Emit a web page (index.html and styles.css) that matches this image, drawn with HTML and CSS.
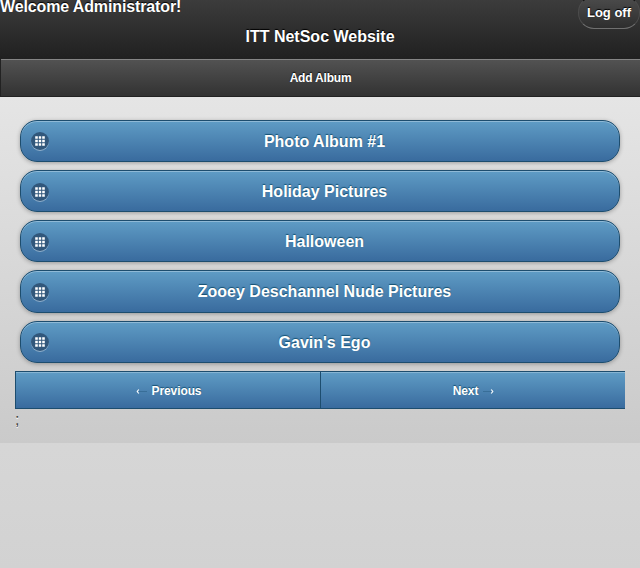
FILE: index.html
```html
<!DOCTYPE html>
<html lang="en">
<head>
<meta charset="utf-8">
<title>ITT NetSoc Website</title>
<link rel="stylesheet" href="styles.css">
</head>
<body>
<svg class="defs" aria-hidden="true">
  <symbol id="grid" viewBox="0 0 18 18"><path fill="#fff" d="M4.2 4.2h2.6v2.6H4.2zM7.8 4.2h2.4v2.6H7.8zM11.2 4.2h2.6v2.6h-2.6zM4.2 7.8h2.6v2.4H4.2zM7.8 7.8h2.4v2.4H7.8zM11.2 7.8h2.6v2.4h-2.6zM4.2 11.2h2.6v2.6H4.2zM7.8 11.2h2.4v2.6H7.8zM11.2 11.2h2.6v2.6h-2.6z"/></symbol>
</svg>
<header class="header">
  <div class="welcome">Welcome Administrator!</div>
  <h1 class="title">ITT NetSoc Website</h1>
  <a class="logoff">Log off</a>
</header>
<nav class="toolbar"><a>Add Album</a></nav>
<main class="content">
  <div class="albums">
    <a class="album"><svg class="icon"><use href="#grid"/></svg><span>Photo Album #1</span></a>
    <a class="album"><svg class="icon low"><use href="#grid"/></svg><span>Holiday Pictures</span></a>
    <a class="album"><svg class="icon low"><use href="#grid"/></svg><span>Halloween</span></a>
    <a class="album tall"><svg class="icon"><use href="#grid"/></svg><span>Zooey Deschannel Nude Pictures</span></a>
    <a class="album"><svg class="icon"><use href="#grid"/></svg><span>Gavin's Ego</span></a>
  </div>
  <nav class="pager">
    <a><svg class="arrow" viewBox="0 0 12 7"><path class="shaft" d="M3 3.5h8"/><path class="head" d="M2.8 1.5 1.2 3.5l1.6 2"/></svg><span>Previous</span></a>
    <a><span>Next</span><svg class="arrow" viewBox="0 0 12 7"><path class="shaft" d="M1 3.5h8"/><path class="head" d="M9.2 1.5 10.8 3.5 9.2 5.5"/></svg></a>
  </nav>
  <div class="stray">;</div>
</main>
</body>
</html>
```
FILE: styles.css
```css
* { box-sizing: border-box; }
html { background: #d3d3d3; }
body {
  margin: 0;
  min-height: 568px;
  background: linear-gradient(#e5e5e5, #d2d2d2);
  font: 16px/20px "Liberation Sans", Arial, sans-serif;
}
.defs { display: none; }
.header {
  position: relative;
  height: 59px;
  background: linear-gradient(#3c3c3c, #202020);
  color: #fff;
  font-weight: bold;
  text-shadow: 0 -1px 1px #000;
}
.welcome { height: 27px; line-height: 14px; letter-spacing: -.13px; }
.title { margin: 0; font-size: 16px; line-height: 20px; text-align: center; }
.logoff {
  position: absolute;
  right: 0;
  top: -4px;
  width: 62px;
  height: 33px;
  border: 1px solid #151515;
  border-bottom-color: #707070;
  border-left-color: #4c4c4c;
  border-right-color: #4c4c4c;
  border-radius: 16px;
  background: linear-gradient(#4c4c4c, #2e2e2e);
  font-size: 13px;
  line-height: 32px;
  text-align: center;
}
.toolbar {
  height: 38px;
  border: solid #222;
  border-width: 0 0 1px 1px;
  background: linear-gradient(#535353, #323232);
  box-shadow: inset 0 1px 0 #858585;
  color: #fff;
  font-size: 12px;
  font-weight: bold;
  letter-spacing: -.2px;
  line-height: 38px;
  text-align: center;
  text-shadow: 0 -1px 1px #111;
}
.content {
  height: 346px;
  padding: 23px 15px 0;
  background: linear-gradient(#e5e5e5, #cacaca);
}
.albums { display: flex; flex-direction: column; gap: 8px; padding: 0 5px; }
.album {
  display: flex;
  align-items: center;
  height: 42px;
  padding: 0 19px 0 10px;
  border: 1px solid #1d4d6e;
  border-radius: 17px;
  background: linear-gradient(#5f9cc5, #396b9e);
  box-shadow: inset 0 1px 0 rgba(255,255,255,.3), 0 1px 4px rgba(0,0,0,.3);
  color: #fff;
  font-weight: bold;
  text-shadow: 0 -1px 1px #145072;
}
.tall { height: 43px; }
.album span { flex: 1; padding-top: 2px; text-align: center; }
.tall span { padding-top: 0; }
.icon {
  flex: none;
  width: 18px;
  height: 18px;
  border-radius: 50%;
  background: #31577b;
  box-shadow: 0 1px 0 rgba(255,255,255,.4);
}
.low { margin-top: 2px; }
.pager {
  display: grid;
  grid-template-columns: 305px 305px;
  height: 38px;
  margin-top: 8px;
}
.pager a {
  display: flex;
  align-items: center;
  justify-content: center;
  gap: 4px;
  padding: 1px 0 0 1px;
  border: solid #1d4d6e;
  border-width: 1px 0 1px 1px;
  background: linear-gradient(#5f9cc5, #396b9e);
  box-shadow: inset 0 1px 0 rgba(255,255,255,.25);
  color: #fff;
  font-size: 12px;
  font-weight: bold;
  letter-spacing: -.1px;
  text-shadow: 0 -1px 1px #145072;
}
.arrow { width: 12px; height: 7px; margin-top: 1px; }
.arrow path { fill: none; }
.shaft { stroke: #386e98; stroke-width: 1; }
.head { stroke: #fff; stroke-width: 1.1; }
.stray { padding-top: 1px; color: #444; text-shadow: 0 1px 0 #fff; }
```
